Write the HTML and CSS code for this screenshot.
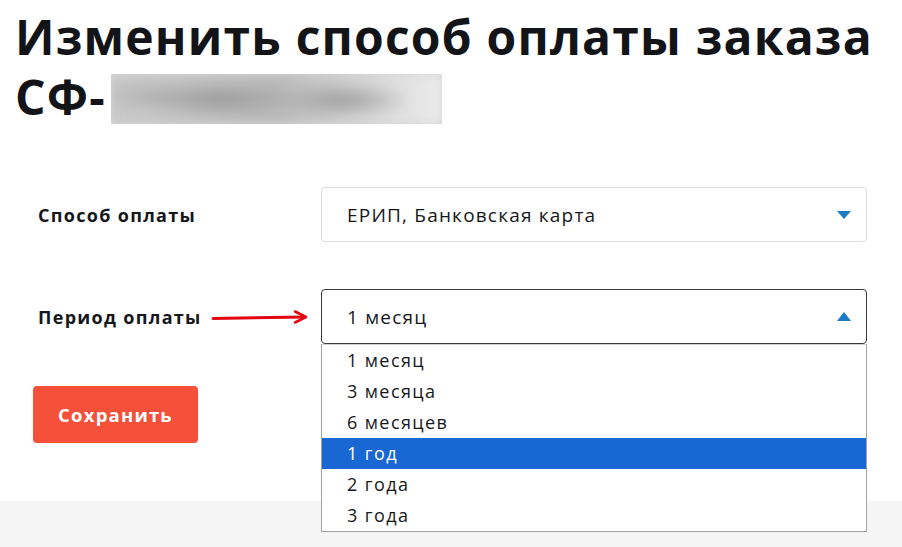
FILE: index.html
```html
<!DOCTYPE html>
<html lang="ru">
<head>
<meta charset="utf-8">
<link rel="stylesheet" href="styles.css">
</head>
<body>
<div class="page">
  <h1 class="title">Изменить способ оплаты заказа<br>СФ-<span class="blur-wrap"><span class="blur"></span></span></h1>

  <div class="form">
    <div class="row">
      <div class="label">Способ оплаты</div>
      <div class="select">
        <span>ЕРИП, Банковская карта</span>
        <svg class="caret" width="14" height="8" viewBox="0 0 14 8"><path d="M0 0H14L7 8Z" fill="#1a7bc2"/></svg>
      </div>
    </div>

    <div class="row row-period">
      <div class="label">Период оплаты
        <svg class="arrow" width="98" height="16" viewBox="0 0 98 16"><path d="M2 9.5L94 8" stroke="#e30613" stroke-width="3" stroke-linecap="round" fill="none"/><path d="M84 2.5L95 8L84 13.5" stroke="#e30613" stroke-width="2.6" stroke-linecap="round" stroke-linejoin="round" fill="none"/></svg>
      </div>
      <div class="select-wrap">
        <div class="select open">
          <span>1 месяц</span>
          <svg class="caret" width="14" height="9" viewBox="0 0 14 9"><path d="M0 9H14L7 0Z" fill="#1a7bc2"/></svg>
        </div>
        <ul class="options">
          <li>1 месяц</li>
          <li>3 месяца</li>
          <li>6 месяцев</li>
          <li class="active">1 год</li>
          <li>2 года</li>
          <li>3 года</li>
        </ul>
      </div>
    </div>

    <div class="actions">
      <button class="save">Сохранить</button>
    </div>
  </div>
</div>
<div class="footer"></div>
</body>
</html>
```

FILE: styles.css
```css
html, body {
  margin: 0;
  padding: 0;
  background: #fff;
}
body {
  font-family: "Open Sans", "Noto Sans", sans-serif;
  color: #16171b;
  height: 547px;
  overflow: hidden;
}
.page {
  height: 501px;
  padding-left: 15px;
  box-sizing: border-box;
}
.title {
  margin: 0;
  padding-top: 7px;
  font-size: 48px;
  line-height: 60px;
  font-weight: 700;
  letter-spacing: 1.2px;
  color: #131418;
}
.blur-wrap {
  display: inline-block;
  width: 331px;
  height: 50px;
  margin-left: 5px;
  overflow: hidden;
  vertical-align: -9px;
  background: #d6d6d6;
}
.blur {
  display: block;
  width: 100%;
  height: 100%;
  background:
    radial-gradient(ellipse 80px 18px at 110px 25px, #9c9c9c, transparent),
    radial-gradient(ellipse 70px 18px at 230px 26px, #a2a2a2, transparent),
    radial-gradient(ellipse 60px 16px at 40px 22px, #b4b4b4, transparent),
    linear-gradient(90deg, #c9c9c9, #b9b9b9 50%, #ececec);
  filter: blur(5px);
}
.form {
  padding-left: 18px;
  margin-top: 60px;
}
.row {
  display: flex;
  align-items: center;
}
.row-period {
  margin-top: 47px;
}
.label {
  width: 288px;
  padding-left: 5px;
  box-sizing: border-box;
  font-size: 18px;
  font-weight: 700;
  letter-spacing: 1.3px;
  display: flex;
  align-items: center;
  white-space: nowrap;
}
.arrow {
  margin-left: 9px;
  margin-top: 1px;
}
.select-wrap {
  position: relative;
}
.select {
  width: 546px;
  height: 55px;
  box-sizing: border-box;
  border: 1px solid #dcdcdc;
  border-radius: 4px;
  display: flex;
  align-items: center;
  justify-content: space-between;
  padding: 0 15px 0 25px;
  font-size: 19px;
  letter-spacing: 1.2px;
  color: #16171b;
}
.select.open {
  border-color: #3a3a3a;
}
.options {
  position: absolute;
  left: 0;
  top: 55px;
  width: 546px;
  box-sizing: border-box;
  margin: 0;
  padding: 0;
  list-style: none;
  border: 1px solid #a3a3a3;
  border-top-color: #d0d0d0;
  background: #fff;
}
.options li {
  height: 31px;
  line-height: 30px;
  padding-left: 25px;
  font-size: 18px;
  letter-spacing: 1.4px;
  color: #16171b;
}
.options li.active {
  background: #1967d2;
  color: #fff;
}
.actions {
  margin-top: 42px;
}
.save {
  width: 165px;
  height: 57px;
  border: none;
  border-radius: 4px;
  background: #f4503a;
  color: #fff;
  font-family: "Open Sans", "Noto Sans", sans-serif;
  font-size: 18.5px;
  font-weight: 700;
  letter-spacing: 1.2px;
  padding: 0;
}
.footer {
  height: 46px;
  background: #f5f5f5;
}
```
